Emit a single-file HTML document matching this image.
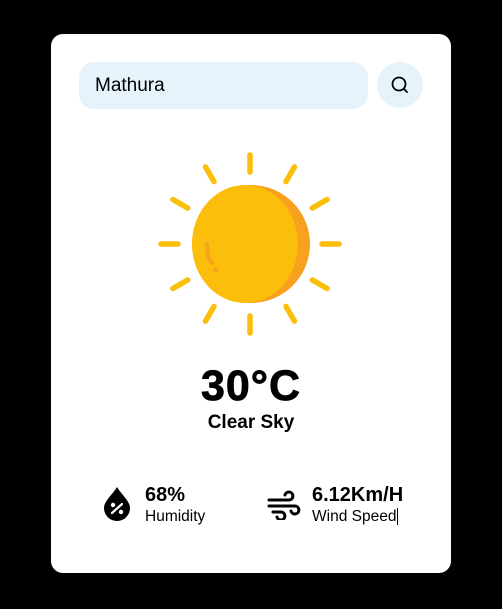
<!DOCTYPE html>
<html><head><style>
html,body{margin:0;padding:0;background:#000;width:502px;height:609px;overflow:hidden;font-family:"Liberation Sans",Arial,sans-serif}
.card{position:absolute;left:51px;top:34px;width:400px;height:539px;background:#fff;border-radius:12px}
.inp{position:absolute;left:28px;top:28px;width:289px;height:47px;background:#e6f3fb;border-radius:15px}
.inp span{position:absolute;left:16px;top:13px;font-size:19px;color:#000}
.btn{position:absolute;left:326px;top:28px;width:46px;height:46px;border-radius:50%;background:#e6f3fb}
.temp{position:absolute;left:0;width:400px;text-align:center;top:328px;font-size:43px;font-weight:bold;letter-spacing:1px;-webkit-text-stroke:0.8px #000}
.desc{position:absolute;left:0;width:400px;text-align:center;top:378px;font-size:19px;font-weight:bold}
.v{position:absolute;font-size:20px;font-weight:bold;top:450px}
.l{position:absolute;font-size:15.5px;top:474px}
</style></head><body>
<div class="card">
<div class="inp"><span>Mathura</span></div>
<div class="btn"><svg width="46" height="46" viewBox="0 0 46 46"><circle cx="22" cy="22" r="6.5" fill="none" stroke="#000" stroke-width="1.8"/><line x1="26.8" y1="26.8" x2="30" y2="30" stroke="#000" stroke-width="1.8" stroke-linecap="round"/></svg></div>
<svg style="position:absolute;left:0;top:0" width="400" height="320" viewBox="51 34 400 320">
<g stroke="#fbbe0a" stroke-width="5.5" stroke-linecap="round">
<g transform="translate(250,244)">
<line x1="0" y1="-72" x2="0" y2="-89"/>
<line x1="0" y1="-72" x2="0" y2="-89" transform="rotate(30)"/>
<line x1="0" y1="-72" x2="0" y2="-89" transform="rotate(60)"/>
<line x1="0" y1="-72" x2="0" y2="-89" transform="rotate(90)"/>
<line x1="0" y1="-72" x2="0" y2="-89" transform="rotate(120)"/>
<line x1="0" y1="-72" x2="0" y2="-89" transform="rotate(150)"/>
<line x1="0" y1="-72" x2="0" y2="-89" transform="rotate(180)"/>
<line x1="0" y1="-72" x2="0" y2="-89" transform="rotate(210)"/>
<line x1="0" y1="-72" x2="0" y2="-89" transform="rotate(240)"/>
<line x1="0" y1="-72" x2="0" y2="-89" transform="rotate(270)"/>
<line x1="0" y1="-72" x2="0" y2="-89" transform="rotate(300)"/>
<line x1="0" y1="-72" x2="0" y2="-89" transform="rotate(330)"/>
</g></g>
<circle cx="251" cy="244" r="59" fill="#f7a11f"/>
<ellipse cx="245" cy="244" rx="53" ry="59" fill="#fbbe0a"/>
<path d="M207 244 Q207 258 212 263" fill="none" stroke="#f7a11f" stroke-width="4" stroke-linecap="round"/>
<circle cx="216" cy="270" r="2.5" fill="#f7a11f"/>
</svg>
<div class="temp">30°C</div>
<div class="desc">Clear Sky</div>
<svg style="position:absolute;left:51px;top:452px" width="30" height="36" viewBox="0 0 30 36"><path d="M15 1 C11 8 2 15 2 22 A13 13 0 0 0 28 22 C28 15 19 8 15 1Z" fill="#000"/><circle cx="11" cy="19" r="2.2" fill="#fff"/><circle cx="19" cy="26" r="2.2" fill="#fff"/><line x1="10" y1="27" x2="20" y2="18" stroke="#fff" stroke-width="2.2" stroke-linecap="round"/></svg>
<div class="v" style="left:94px">68%</div>
<div class="l" style="left:94px">Humidity</div>
<svg style="position:absolute;left:216px;top:456px" width="34" height="30" viewBox="0 0 34 30" fill="none" stroke="#000" stroke-width="3" stroke-linecap="round"><path d="M2 10 H22 A4 4 0 1 0 18 5"/><path d="M2 16 H28 A4 4 0 1 1 24 21"/><path d="M6 22 H14 A4 4 0 1 1 10 27"/></svg>
<div class="v" style="left:261px">6.12Km/H</div>
<div class="l" style="left:261px">Wind Speed<span style="border-left:1px solid #000;margin-left:1px"></span></div>
</div>
</body></html>
